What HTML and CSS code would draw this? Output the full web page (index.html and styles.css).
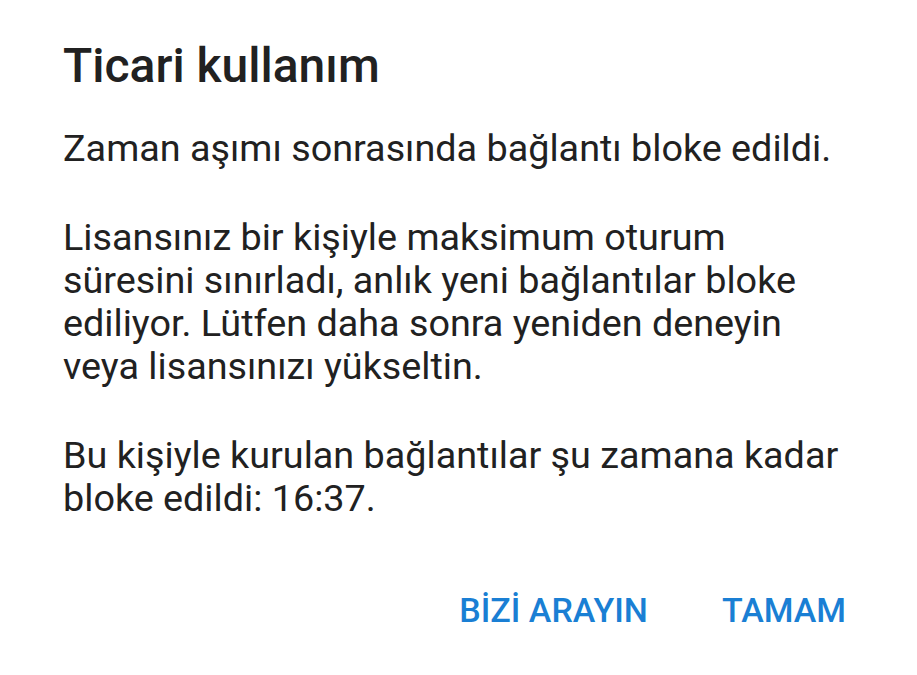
FILE: index.html
```html
<!DOCTYPE html>
<html lang="tr">
<head>
<meta charset="utf-8">
<link rel="stylesheet" href="styles.css">
</head>
<body>
<div class="dialog">
  <h1 class="title">Ticari kullanım</h1>
  <div class="content">
    <p>Zaman aşımı sonrasında bağlantı bloke edildi.</p>
    <p>Lisansınız bir kişiyle maksimum oturum süresini sınırladı, anlık yeni bağlantılar bloke ediliyor. Lütfen daha sonra yeniden deneyin veya lisansınızı yükseltin.</p>
    <p>Bu kişiyle kurulan bağlantılar şu zamana kadar bloke edildi: 16:37.</p>
  </div>
  <div class="actions">
    <button class="btn">BİZİ ARAYIN</button>
    <button class="btn">TAMAM</button>
  </div>
</div>
</body>
</html>
```
FILE: styles.css
```css
html, body {
  margin: 0;
  padding: 0;
  background: #ffffff;
}
body {
  font-family: Roboto, "Noto Sans", sans-serif;
  color: #212121;
}
.dialog {
  width: 917px;
  height: 675px;
  box-sizing: border-box;
  padding: 38px 0 0 63px;
  display: flex;
  flex-direction: column;
}
.title {
  margin: 0;
  font-size: 48px;
  font-weight: 500;
  line-height: 56px;
}
.content {
  margin-top: 33px;
  font-size: 37.75px;
  line-height: 43px;
  width: 791px;
}
.content p {
  margin: 0 0 46px 0;
}
.content p:last-child {
  margin-bottom: 0;
}
.actions {
  display: flex;
  justify-content: flex-end;
  gap: 74px;
  margin-top: 70px;
  margin-right: 71px;
}
.btn {
  background: none;
  border: 0;
  padding: 0;
  font-family: Roboto, "Noto Sans", sans-serif;
  font-size: 34px;
  font-weight: 500;
  color: #1a7fd4;
  line-height: 40px;
}
```
